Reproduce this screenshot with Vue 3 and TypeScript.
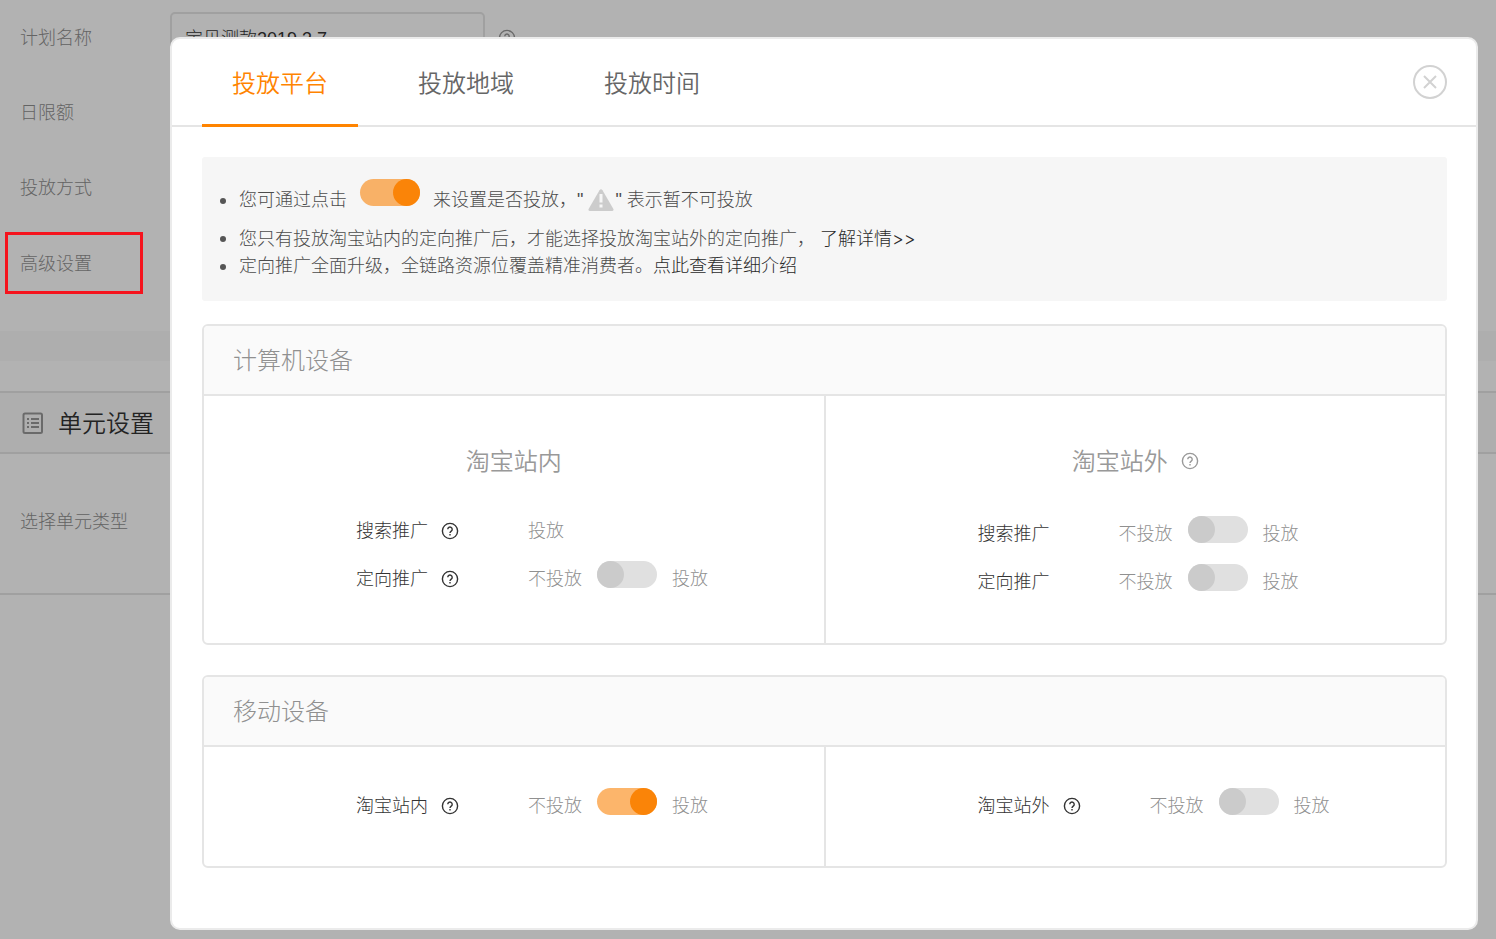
<script setup lang="ts">
import { reactive, ref } from 'vue'

interface Row {
  id: string
  label: string
  help: boolean
  fixed?: boolean
}
interface Cell {
  title?: string
  titleHelp?: boolean
  rows: Row[]
}
interface Device {
  name: string
  cells: Cell[]
}

const tabs = ['投放平台', '投放地域', '投放时间']
const activeTab = ref(0)
const planName = ref('宝贝测款2019.3.7')
const demoOn = ref(true)

const devices: Device[] = [
  {
    name: '计算机设备',
    cells: [
      {
        title: '淘宝站内',
        rows: [
          { id: 'pc-in-search', label: '搜索推广', help: true, fixed: true },
          { id: 'pc-in-target', label: '定向推广', help: true },
        ],
      },
      {
        title: '淘宝站外',
        titleHelp: true,
        rows: [
          { id: 'pc-out-search', label: '搜索推广', help: false },
          { id: 'pc-out-target', label: '定向推广', help: false },
        ],
      },
    ],
  },
  {
    name: '移动设备',
    cells: [
      { rows: [{ id: 'mobile-in', label: '淘宝站内', help: true }] },
      { rows: [{ id: 'mobile-out', label: '淘宝站外', help: true }] },
    ],
  },
]

const enabled = reactive<Record<string, boolean>>({
  'pc-in-target': false,
  'pc-out-search': false,
  'pc-out-target': false,
  'mobile-in': true,
  'mobile-out': false,
})
</script>

<template>
  <div class="page">
    <main class="backdrop">
      <form class="plan" @submit.prevent>
        <div class="field">
          <label class="field-label" for="plan-name">计划名称</label>
          <input id="plan-name" v-model="planName" class="text-box" type="text" />
          <svg class="help" viewBox="0 0 18 18" aria-hidden="true">
            <circle cx="9" cy="9" r="7.6" />
            <path d="M6.8 7.3a2.2 2.2 0 1 1 3.4 1.8c-.8.6-1.2.9-1.2 1.8" />
            <path d="M9 12.1v1.4" />
          </svg>
        </div>
        <div class="field"><span class="field-label">日限额</span></div>
        <div class="field"><span class="field-label">投放方式</span></div>
        <div class="field marked"><span class="field-label">高级设置</span></div>
      </form>
      <div class="band"></div>
      <section class="unit">
        <h2 class="unit-title">
          <svg class="list-icon" viewBox="0 0 22 22" aria-hidden="true">
            <rect x="1.5" y="1.5" width="18.5" height="19.5" rx="1.5" />
            <path d="M5 7h2M9 7h8M5 11h2M9 11h8M5 15h2M9 15h8" />
          </svg>
          <span>单元设置</span>
        </h2>
        <div class="unit-body">选择单元类型</div>
      </section>
    </main>
    <div class="shade"></div>

    <div class="dialog" role="dialog" aria-label="高级设置">
      <header class="dialog-head">
        <nav class="tabs">
          <button
            v-for="(tab, i) in tabs"
            :key="tab"
            type="button"
            class="tab"
            :class="{ active: i === activeTab }"
            @click="activeTab = i"
          >{{ tab }}</button>
        </nav>
        <button type="button" class="close" aria-label="关闭">
          <svg viewBox="0 0 34 34" aria-hidden="true">
            <circle cx="17" cy="17" r="16" />
            <path d="M11 11l12 12M23 11L11 23" />
          </svg>
        </button>
      </header>

      <div class="dialog-body">
        <ul class="tips">
          <li>
            <div class="tip-line">
              <span>您可通过点击</span>
              <input v-model="demoOn" class="switch" type="checkbox" role="switch" aria-label="投放开关示例" />
              <span>来设置是否投放，"</span>
              <svg class="warn" viewBox="0 0 26 22" aria-hidden="true">
                <path class="tri" d="M11.5 1.2Q13 -.5 14.5 1.2L25.4 20Q26 22 24 22H2Q0 22 .6 20Z" />
                <path class="mark" d="M13 5v8.5M13 15.5v3" />
              </svg>
              <span>" 表示暂不可投放</span>
            </div>
          </li>
          <li>您只有投放淘宝站内的定向推广后，才能选择投放淘宝站外的定向推广， <a href="#">了解详情<span class="arrows">&gt;&gt;</span></a></li>
          <li>定向推广全面升级，全链路资源位覆盖精准消费者。<a href="#">点此查看详细介绍</a></li>
        </ul>

        <section v-for="device in devices" :key="device.name" class="card">
          <h3 class="card-title">{{ device.name }}</h3>
          <div class="cells">
            <div v-for="(cell, c) in device.cells" :key="c" class="cell" :class="{ titled: cell.title }">
              <h4 v-if="cell.title" class="cell-title" :class="{ tall: cell.titleHelp }">
                {{ cell.title }}
                <svg v-if="cell.titleHelp" class="help" viewBox="0 0 18 18" aria-hidden="true">
                  <circle cx="9" cy="9" r="7.6" />
                  <path d="M6.8 7.3a2.2 2.2 0 1 1 3.4 1.8c-.8.6-1.2.9-1.2 1.8" />
                  <path d="M9 12.1v1.4" />
                </svg>
              </h4>
              <div v-for="row in cell.rows" :key="row.id" class="row">
                <span v-if="row.fixed">{{ row.label }}</span>
                <label v-else :for="row.id">{{ row.label }}</label>
                <svg v-if="row.help" class="help" viewBox="0 0 18 18" aria-hidden="true">
                  <circle cx="9" cy="9" r="7.6" />
                  <path d="M6.8 7.3a2.2 2.2 0 1 1 3.4 1.8c-.8.6-1.2.9-1.2 1.8" />
                  <path d="M9 12.1v1.4" />
                </svg>
                <div class="choice">
                  <template v-if="!row.fixed">
                    <span>不投放</span>
                    <input :id="row.id" v-model="enabled[row.id]" class="switch" type="checkbox" role="switch" />
                  </template>
                  <span>投放</span>
                </div>
              </div>
            </div>
          </div>
        </section>
      </div>
    </div>
  </div>
</template>

<style>
body {
  background: #b2b2b2;
}
</style>

<style scoped>
.page {
  position: relative;
  min-height: 100vh;
  box-sizing: border-box;
  overflow: hidden;
  background: #fff;
  color: #333;
  font-family: "Liberation Sans", "Noto Sans CJK SC", sans-serif;
  font-size: 18px;
  font-weight: 300;
  line-height: 27px;
}
.page *,
.page *::before {
  box-sizing: border-box;
}
button,
input {
  font: inherit;
  color: inherit;
}
h2,
h3,
h4 {
  margin: 0;
  font-weight: 300;
}

.plan {
  display: flex;
  flex-direction: column;
  gap: 25px;
  padding-top: 12px;
  height: 331px;
}
.field {
  display: flex;
  align-items: center;
  height: 50px;
  padding-left: 20px;
}
.field-label {
  width: 150px;
  padding-top: 2px;
  color: #909090;
}
.text-box {
  width: 315px;
  height: 50px;
  padding: 0 13px;
  border: 2px solid #e5e5e5;
  border-radius: 5px;
  background: transparent;
}
.field .help {
  margin-top: 2px;
  color: #999;
}
.marked {
  width: 138px;
  height: 62px;
  margin: -5px 0 0 5px;
  padding-left: 12px;
  border: 3px solid #f5131d;
  position: relative;
  z-index: 2;
  color: #656565;
}
.marked .field-label {
  color: inherit;
}
.band {
  height: 30px;
  background: #fafafa;
}
.unit {
  margin-top: 30px;
  border: solid #e5e5e5;
  border-width: 2px 0;
}
.unit-title {
  display: flex;
  align-items: center;
  gap: 14px;
  height: 61px;
  padding-left: 22px;
  border-bottom: 2px solid #e5e5e5;
  background: #fafafa;
  font-size: 24px;
}
.unit-title span {
  padding-top: 2px;
}
.list-icon {
  width: 22px;
  height: 22px;
  fill: none;
  stroke: #999;
  stroke-width: 2;
}
.unit-body {
  height: 139px;
  padding: 55px 20px;
  color: #909090;
}
.shade {
  position: absolute;
  inset: 0;
  background: rgba(0, 0, 0, 0.3);
}

.dialog {
  position: absolute;
  top: 37px;
  left: 170px;
  right: 18px;
  border: 2px solid #ebebeb;
  border-radius: 10px;
  background: #fff;
}
.dialog-head {
  display: flex;
  justify-content: space-between;
  height: 88px;
  padding: 0 29px 0 30px;
  border-bottom: 2px solid #e5e5e5;
}
.tabs {
  display: flex;
  gap: 30px;
}
.tab {
  height: 88px;
  padding: 3px 30px 0;
  border: 0;
  border-bottom: 3px solid transparent;
  background: none;
  color: #666;
  font-size: 24px;
  cursor: pointer;
}
.tab,
.unit-title,
.cell-title {
  font-family: "Liberation Sans", "Noto Sans CJK SC DemiLight", "Noto Sans CJK SC", sans-serif;
  font-weight: 350;
}
.tab.active {
  border-color: #ff8400;
  color: #ff8400;
}
.close {
  align-self: center;
  width: 34px;
  height: 34px;
  padding: 0;
  border: 0;
  background: none;
  cursor: pointer;
}
.close svg {
  display: block;
  fill: none;
  stroke: #d2d2d2;
  stroke-width: 2;
}
.dialog-body {
  padding: 30px 29px 60px 30px;
}

.tips {
  margin: 0 0 23px;
  padding: 21px 37px;
  border-radius: 3px;
  background: #f6f6f6;
  color: #4c4c4c;
  list-style: none;
}
.tips li {
  position: relative;
}
.tips li::before {
  content: "";
  position: absolute;
  top: calc(50% - 3px);
  left: -19px;
  width: 6px;
  height: 6px;
  border-radius: 50%;
  background: #555;
}
.tips li:first-child {
  margin-bottom: 2px;
}
.tip-line {
  display: flex;
  align-items: center;
  height: 45px;
}
.tip-line .switch {
  margin: 0 13px 16px;
}
.tips a {
  color: #2a2a2a;
  text-decoration: none;
}
.arrows {
  font-family: Inter, sans-serif;
  font-weight: 300;
}
.warn {
  width: 26px;
  height: 22px;
  margin: 0 1px 2px 5px;
}
.tri {
  fill: #ccc;
}
.mark {
  stroke: #f6f6f6;
  stroke-width: 3;
}

.switch {
  appearance: none;
  flex: none;
  width: 60px;
  height: 27px;
  margin: 0 15px 9px;
  border-radius: 14px;
  background: #e0e0e0;
  cursor: pointer;
}
.switch::before {
  content: "";
  display: block;
  width: 27px;
  height: 27px;
  border-radius: 50%;
  background: #cbcbcb;
}
.switch:checked {
  background: rgba(250, 132, 8, 0.6);
}
.switch:checked::before {
  margin-left: 33px;
  background: #fa8408;
}

.card {
  border: 2px solid #e5e5e5;
  border-radius: 6px;
}
.card + .card {
  margin-top: 30px;
}
.card-title {
  height: 70px;
  padding: 0 29px;
  border-bottom: 2px solid #e5e5e5;
  border-radius: 4px 4px 0 0;
  background: #fafafa;
  color: #909090;
  font-size: 24px;
  line-height: 70px;
}
.cells {
  display: grid;
  grid-template-columns: calc(50% - 1px) 1fr;
}
.cell {
  padding: 35px 0 36px;
}
.cell.titled {
  padding-bottom: 37px;
}
.cell + .cell {
  border-left: 2px solid #e5e5e5;
}
.cell-title {
  display: flex;
  justify-content: center;
  align-items: center;
  height: 60px;
  margin-bottom: 16px;
  color: #999;
  font-size: 24px;
}
.cell-title.tall {
  margin-bottom: 19px;
}
.row {
  display: flex;
  align-items: center;
  height: 48px;
  padding-left: 152px;
}
.help {
  flex: none;
  width: 18px;
  height: 18px;
  margin-left: 13px;
  fill: none;
  stroke: currentColor;
  stroke-width: 1.4;
}
.choice {
  display: flex;
  align-items: center;
  margin-left: 69px;
  color: #909090;
}
</style>
